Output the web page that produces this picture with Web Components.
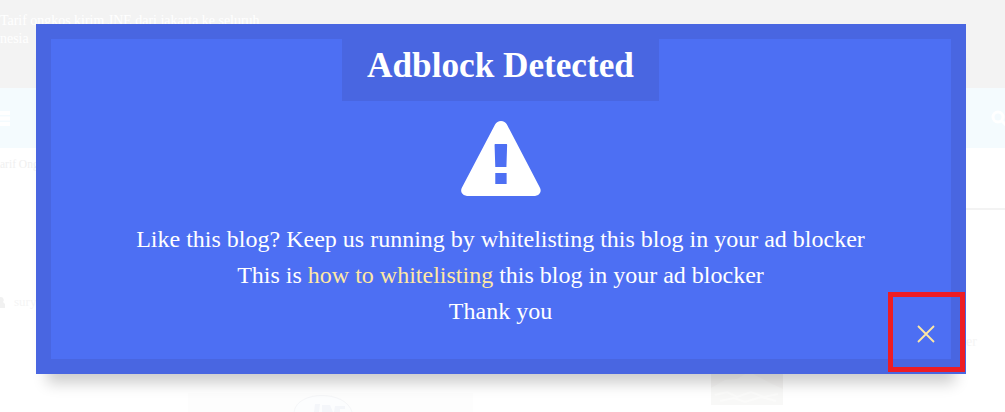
<!DOCTYPE html>
<html lang="en">
<head>
<meta charset="utf-8">
<title>Adblock Detected</title>
<style>
  body {
    margin: 0;
    background: #fff;
    font-family: "Liberation Serif", "Times New Roman", serif;
    overflow: hidden;
  }
</style>
</head>
<body>
<blog-page>
  <span slot="headline">Tarif ongkos kirim JNE dari jakarta ke seluruh<br>nesia</span>
  <span slot="crumb">arif Ongk</span>
  <span slot="author">sury</span>
  <span slot="widget">er</span>
</blog-page>

<adblock-notice>
  <span slot="title">Adblock Detected</span>
  <warning-icon slot="icon"></warning-icon>
  Like this blog? Keep us running by whitelisting this blog in your ad blocker<br>
  This is <notice-link>how to whitelisting</notice-link> this blog in your ad blocker<br>
  Thank you
  <close-button slot="close"></close-button>
</adblock-notice>

<script>
/**
 * The faded page behind the notice
 */
class BlogPage extends HTMLElement {
  constructor() {
    super();
    this.attachShadow({mode: 'open'}).innerHTML = `
      <style>
        :host {
          display: flex;
          flex-direction: column;
          height: 412px;
          overflow: hidden;
        }
        svg {
          display: block;
        }
        header {
          height: 76px;
          padding-top: 12px;
          background: #f3f3f3;
          color: #fff;
          font-size: 13.95px;
          line-height: 18px;
          white-space: nowrap;
        }
        nav {
          display: flex;
          align-items: center;
          justify-content: space-between;
          height: 60px;
          background: #f4fbfe;
        }
        .crumb {
          box-sizing: border-box;
          height: 60px;
          padding-top: 9px;
          font-size: 11.5px;
          line-height: 15px;
          color: #f0f0f0;
        }
        .rule {
          align-self: flex-end;
          width: 300px;
          height: 2px;
          background: #f3f3f3;
        }
        .meta {
          display: flex;
          align-items: center;
          gap: 9px;
          height: 16px;
          margin-top: 84px;
          font-size: 13px;
          color: #f5f5f5;
        }
        .widget {
          align-self: flex-end;
          width: 39px;
          height: 16px;
          margin-top: 24px;
          font-size: 14px;
          line-height: 16px;
          color: #f5f5f5;
        }
        .pictures {
          display: flex;
          gap: 238px;
          margin: 24px 0 0 188px;
        }
        .logo {
          margin-top: 19px;
        }
      </style>
      <header><slot name="headline"></slot></header>
      <nav>
        <svg width="10" height="16" fill="#fff"><path d="M0 1h10v4H0zM0 6.500h10v4H0zM0 12h10v4H0z"/></svg>
        <svg width="14" height="16" fill="none" stroke="#fff" stroke-width="3"><circle cx="7" cy="7" r="5"/><path d="M10.500 10.500l5 5"/></svg>
      </nav>
      <div class="crumb"><slot name="crumb"></slot></div>
      <div class="rule"></div>
      <div class="meta">
        <svg width="5" height="11" fill="#f1f1f1"><path d="M0 0h1a3 3 0 0 1 2 5l2 2v4H0z"/></svg>
        <slot name="author"></slot>
      </div>
      <div class="widget"><slot name="widget"></slot></div>
      <div class="pictures">
        <svg class="logo" width="285" height="19">
          <path d="M0 0h285v19H0z" fill="#fdfdfd"/>
          <path d="M106 19c3-22 52-22 58 0" fill="#fcfdfe" stroke="#f5f6f8"/>
          <path d="M127 11h5l-1 8h-5zM134 12h8l3 7h-11zM147 13h10v3h-5v3h-6z" fill="#f4f6fa"/>
        </svg>
        <svg width="72" height="31">
          <path d="M0 0h72v31H0z" fill="#f8f8f7"/>
          <path d="M0 0h34l-8 5-12 1-14 8zM42 0h30v15l-15-7z" fill="#f5f4f3"/>
          <path d="M4 21l12-3 10 5 14-5 13 5 14-3M9 27l14-3 11 4 16-5 15 4" fill="none" stroke="#fbfbfa" stroke-width="2"/>
        </svg>
      </div>
    `;
  }
}

/**
 * The notice box. Lies over the page, the lines of its message go in the default slot.
 */
class AdblockNotice extends HTMLElement {
  constructor() {
    super();
    this.attachShadow({mode: 'open'}).innerHTML = `
      <style>
        :host {
          position: absolute;
          top: 24px;
          left: 36px;
          box-sizing: border-box;
          display: flex;
          flex-direction: column;
          align-items: center;
          width: 930px;
          height: 350px;
          padding-right: 1px;
          border: 15px solid #4966e1;
          background: #4d6ff3;
          color: #fff;
          box-shadow: 0 20px 14px -11px rgba(0, 0, 0, 0.2);
        }
        h2 {
          box-sizing: border-box;
          width: 317px;
          height: 62px;
          margin: 0 0 20px;
          padding-top: 6px;
          background: #4966e1;
          font-size: 35.2px;
          line-height: 41px;
          text-align: center;
        }
        .message {
          margin-top: 25px;
          font-size: 24px;
          line-height: 36px;
          text-align: center;
          white-space: nowrap;
        }
        /* sits on the corner of the border */
        .corner {
          position: absolute;
          right: -14px;
          bottom: -13px;
        }
      </style>
      <h2><slot name="title"></slot></h2>
      <slot name="icon"></slot>
      <div class="message"><slot></slot></div>
      <div class="corner"><slot name="close"></slot></div>
    `;
  }
}

class WarningIcon extends HTMLElement {
  constructor() {
    super();
    this.attachShadow({mode: 'open'}).innerHTML = `
      <style>
        :host {
          display: block;
          width: 80px;
          height: 75px;
          padding-left: 1px;
        }
        svg {
          display: block;
        }
      </style>
      <svg width="80" height="75" viewBox="0 0 81 75" preserveAspectRatio="none">
        <path fill="#fff" fill-rule="evenodd" d="M34.500 3.500Q36.500 0 40.500 0T46.500 3.500L79.800 66.500Q81.500 69.500 79.800 72.300Q78.300 75 75 75H6Q2.700 75 1 72.300Q-.700 69.500 1 66.500ZM34.500 23Q34 23 34 24L34.700 46H46L46.700 24Q46.700 23 46.200 23ZM34.700 52V63H46.200V52Z"/>
      </svg>
    `;
  }
}

class NoticeLink extends HTMLElement {
  constructor() {
    super();
    this.attachShadow({mode: 'open'}).innerHTML = `
      <style>
        :host {
          display: inline;
          color: #ffe8a3;
          cursor: pointer;
        }
      </style><slot></slot>`;
  }
}

class CloseButton extends HTMLElement {
  constructor() {
    super();
    this.attachShadow({mode: 'open'}).innerHTML = `
      <style>
        :host {
          box-sizing: border-box;
          display: flex;
          align-items: center;
          justify-content: center;
          width: 77px;
          height: 80px;
          padding: 3px 1px 0 0;
          border: 5px solid #ed1c24;
          cursor: pointer;
        }
      </style>
      <svg width="18" height="18" fill="none" stroke="#ffe8a3" stroke-width="1.800"><path d="M1 1l16 16M17 1L1 17"/></svg>
    `;
    // Closing takes the whole notice off the page
    this.addEventListener('click', () => this.closest('adblock-notice').remove());
  }
}

customElements.define('blog-page', BlogPage);
customElements.define('adblock-notice', AdblockNotice);
customElements.define('warning-icon', WarningIcon);
customElements.define('notice-link', NoticeLink);
customElements.define('close-button', CloseButton);
</script>
</body>
</html>
